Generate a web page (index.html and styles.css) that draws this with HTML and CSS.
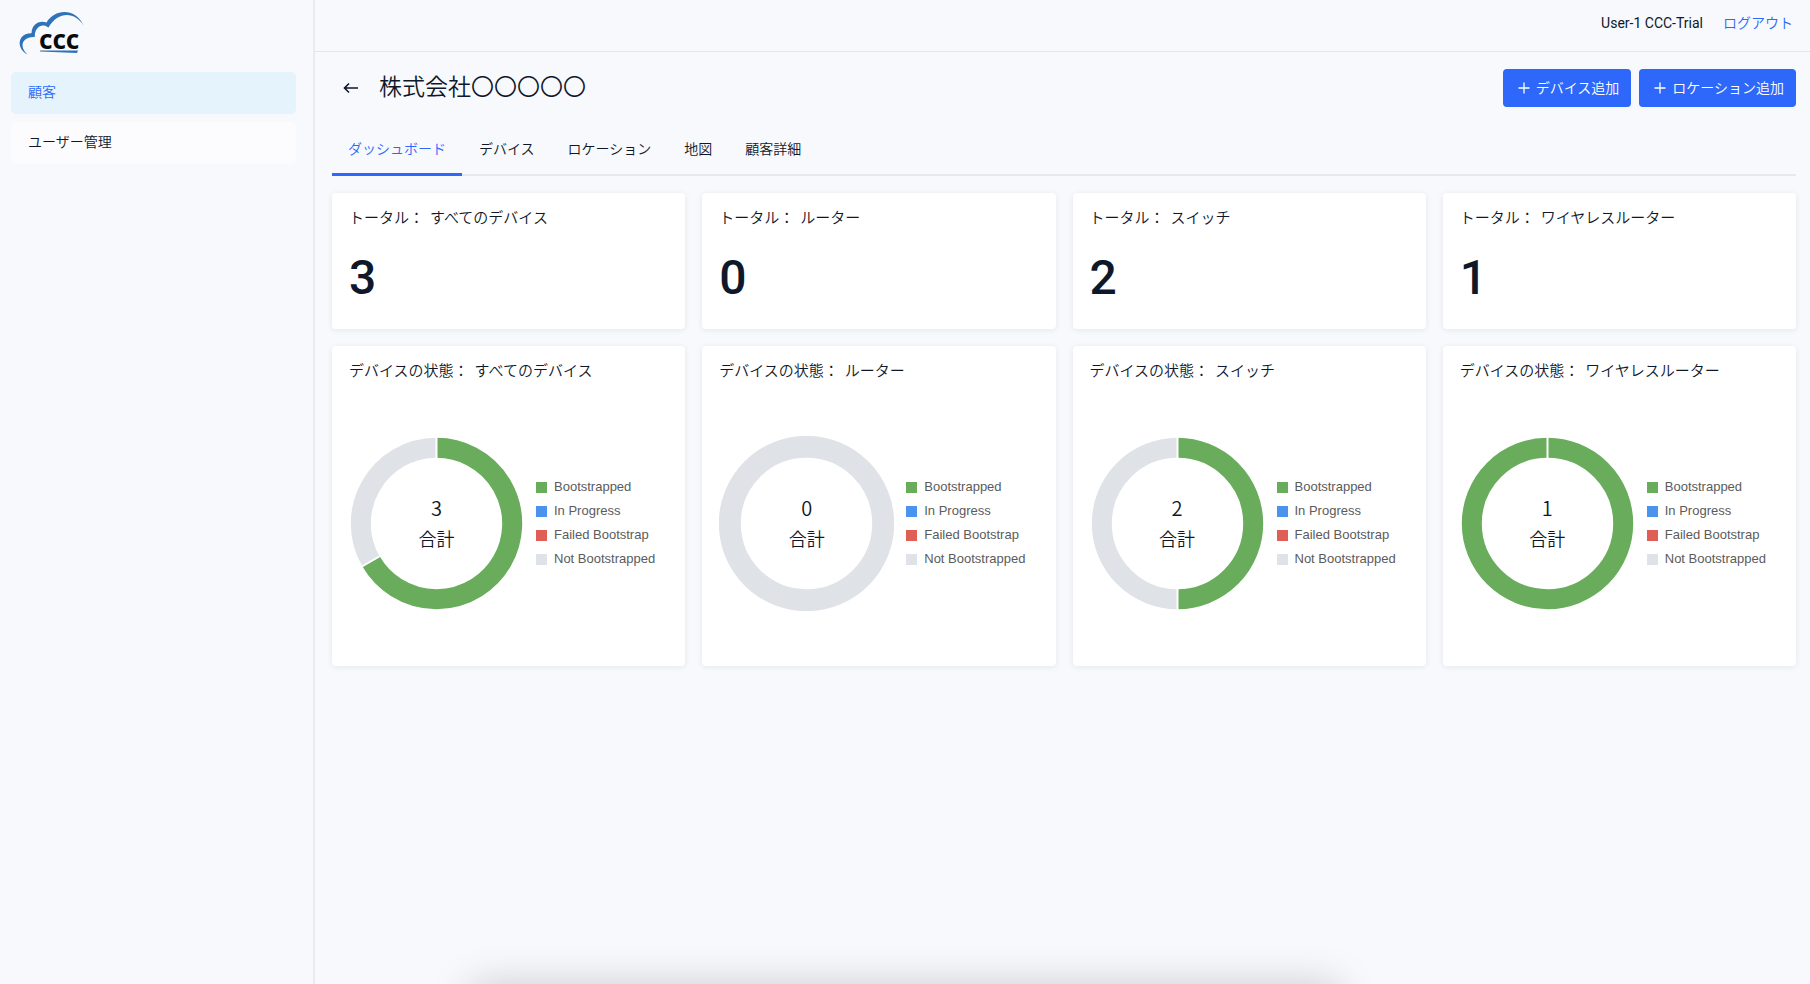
FILE: index.html
```html
<!DOCTYPE html>
<html lang="ja">
<head>
<meta charset="utf-8">
<title>株式会社〇〇〇〇〇</title>
<link rel="stylesheet" href="styles.css">
</head>
<body>
<div class="app">
  <aside class="sidebar">
    <a class="logo" href="#" aria-label="CCC">
      <svg width="66" height="46" viewBox="0 0 66 46" aria-hidden="true">
        <path d="M8.500 44.500C-3 39 -2 23 12.500 23.200C13 14 20 10 27.500 12.500C36 -2 57 -2 64.500 15.500C56 1.500 39 1 29.500 17.500C23 12.500 15.500 17 15.800 27C4 26 -1 36 8.500 44.500Z" fill="#2e72b8"/>
        <text class="logo-text" x="20" y="39">ccc</text>
        <path d="M21 40.500H59L58 43L21 41.500Z" fill="#2e72b8"/>
      </svg>
    </a>
    <nav class="menu">
      <a class="menu-item active" href="#">顧客</a>
      <a class="menu-item" href="#">ユーザー管理</a>
    </nav>
  </aside>
  <div class="page">
    <header class="topbar">
      <span class="user">User-1 CCC-Trial</span>
      <a class="logout" href="#">ログアウト</a>
    </header>
    <main class="content">
      <div class="title-row">
        <button class="back" type="button" aria-label="戻る">
          <svg width="16" height="16" viewBox="0 0 16 16" aria-hidden="true"><path d="M15 8H2M6 3.500L1.500 8L6 12.500" fill="none" stroke="currentColor" stroke-width="1.600"/></svg>
        </button>
        <h1 class="title">株式会社〇〇〇〇〇</h1>
        <div class="actions">
          <button class="btn" type="button"><svg width="14" height="14" viewBox="0 0 14 14" aria-hidden="true"><path d="M7 1.500V12.500M1.500 7H12.500" stroke="currentColor" stroke-width="1.300"/></svg>デバイス追加</button>
          <button class="btn" type="button"><svg width="14" height="14" viewBox="0 0 14 14" aria-hidden="true"><path d="M7 1.500V12.500M1.500 7H12.500" stroke="currentColor" stroke-width="1.300"/></svg>ロケーション追加</button>
        </div>
      </div>
      <nav class="tabs">
        <a class="tab active" href="#">ダッシュボード</a>
        <a class="tab" href="#">デバイス</a>
        <a class="tab" href="#">ロケーション</a>
        <a class="tab" href="#">地図</a>
        <a class="tab" href="#">顧客詳細</a>
      </nav>
      <div class="cards">
        <section class="card"><h2 class="card-title"><span>トータル：</span> <span>すべてのデバイス</span></h2><p class="total">3</p></section>
        <section class="card"><h2 class="card-title"><span>トータル：</span> <span>ルーター</span></h2><p class="total">0</p></section>
        <section class="card"><h2 class="card-title"><span>トータル：</span> <span>スイッチ</span></h2><p class="total">2</p></section>
        <section class="card"><h2 class="card-title"><span>トータル：</span> <span>ワイヤレスルーター</span></h2><p class="total">1</p></section>

        <section class="card">
          <h2 class="card-title"><span>デバイスの状態：</span> <span>すべてのデバイス</span></h2>
          <div class="chart">
            <div class="donut">
              <svg class="ring" viewBox="-87.500 -87.500 175 175" aria-hidden="true">
                <path class="arc ok" d="M0 -75.700A75.700 75.700 0 1 1 -65.560 37.850"/>
                <path class="arc none" d="M-65.560 37.850A75.700 75.700 0 0 1 0 -75.700"/>
                <path class="cut" d="M0 -60V-88M-51.960 30L-76.210 44"/>
              </svg>
              <div class="center"><span class="count">3</span><span class="unit">合計</span></div>
            </div>
            <ul class="legend"><li class="key ok">Bootstrapped</li><li class="key progress">In Progress</li><li class="key failed">Failed Bootstrap</li><li class="key none">Not Bootstrapped</li></ul>
          </div>
        </section>
        <section class="card">
          <h2 class="card-title"><span>デバイスの状態：</span> <span>ルーター</span></h2>
          <div class="chart">
            <div class="donut">
              <svg class="ring" viewBox="-87.500 -87.500 175 175" aria-hidden="true">
                <circle class="arc none empty" r="76.700"/>
              </svg>
              <div class="center"><span class="count">0</span><span class="unit">合計</span></div>
            </div>
            <ul class="legend"><li class="key ok">Bootstrapped</li><li class="key progress">In Progress</li><li class="key failed">Failed Bootstrap</li><li class="key none">Not Bootstrapped</li></ul>
          </div>
        </section>
        <section class="card">
          <h2 class="card-title"><span>デバイスの状態：</span> <span>スイッチ</span></h2>
          <div class="chart">
            <div class="donut">
              <svg class="ring" viewBox="-87.500 -87.500 175 175" aria-hidden="true">
                <path class="arc ok" d="M0 -75.700A75.700 75.700 0 0 1 0 75.700"/>
                <path class="arc none" d="M0 75.700A75.700 75.700 0 0 1 0 -75.700"/>
                <path class="cut" d="M0 -60V-88M0 60V88"/>
              </svg>
              <div class="center"><span class="count">2</span><span class="unit">合計</span></div>
            </div>
            <ul class="legend"><li class="key ok">Bootstrapped</li><li class="key progress">In Progress</li><li class="key failed">Failed Bootstrap</li><li class="key none">Not Bootstrapped</li></ul>
          </div>
        </section>
        <section class="card">
          <h2 class="card-title"><span>デバイスの状態：</span> <span>ワイヤレスルーター</span></h2>
          <div class="chart">
            <div class="donut">
              <svg class="ring" viewBox="-87.500 -87.500 175 175" aria-hidden="true">
                <circle class="arc ok" r="75.700"/>
                <path class="cut" d="M0 -60V-88"/>
              </svg>
              <div class="center"><span class="count">1</span><span class="unit">合計</span></div>
            </div>
            <ul class="legend"><li class="key ok">Bootstrapped</li><li class="key progress">In Progress</li><li class="key failed">Failed Bootstrap</li><li class="key none">Not Bootstrapped</li></ul>
          </div>
        </section>
      </div>
    </main>
  </div>
</div>
<div class="bottom-shade"></div>
</body>
</html>
```
FILE: styles.css
```css
* { box-sizing: border-box; }
body {
  margin: 0;
  background: #f7f9fd;
  color: #0f172a;
  font: 350 14px/22px Roboto, "Noto Sans CJK JP", sans-serif;
}
a { color: inherit; text-decoration: none; }
button { font: inherit; border: 0; cursor: pointer; }
h1, h2, p, ul { margin: 0; padding: 0; font-weight: inherit; }

.app { display: flex; min-height: 100vh; }
.sidebar {
  flex: 0 0 315px;
  padding: 10px 17px 0 11px;
  border-right: 2px solid #e9ebf0;
}
.logo { display: block; height: 46px; margin: 0 0 16px 8px; }
.logo svg { display: block; }
.logo-text { font: 700 26px "Noto Sans", sans-serif; fill: #0a0a0a; }
.menu { display: grid; gap: 8px; }
.menu-item {
  padding: 9px 17px 11px;
  border-radius: 5px;
  background: #fcfcfe;
}
.menu-item.active { background: #e5f3fc; color: #2d68fb; }

.page { flex: 1; min-width: 0; }
.topbar {
  display: flex;
  justify-content: flex-end;
  gap: 20px;
  padding: 12px 17px 17px;
  border-bottom: 1px solid #e4e6ea;
}
.user { font-weight: 400; }
.logout { color: #2d68fb; }

.content { padding: 17px 14px 17px 17px; }
.title-row { display: flex; align-items: center; height: 38px; }
.back {
  display: flex;
  padding: 0;
  margin: 0 20px 0 11px;
  background: none;
  color: inherit;
}
.title { flex: 1; font-size: 23px; line-height: 38px; }
.actions { display: flex; gap: 8px; }
.btn {
  display: flex;
  align-items: center;
  gap: 5px;
  height: 38px;
  padding: 0 12px 0 14px;
  border-radius: 4px;
  background: #2d68fb;
  color: #fff;
}

.tabs {
  display: flex;
  gap: 1px;
  margin: 31px 0 17px;
  box-shadow: inset 0 -2px #e5e8ec;
}
.tab { padding: 0 16px 13px; border-bottom: 3px solid transparent; }
.tab.active { border-color: #2d68fb; color: #2d68fb; }

.cards {
  display: grid;
  grid-template-columns: repeat(4, 1fr);
  gap: 17px;
}
.card {
  padding: 17px;
  border-radius: 4px;
  background: #fff;
  box-shadow: 0 1px 6px rgba(15, 23, 42, 0.08);
}
.card-title { display: flex; gap: 6px; font-size: 15px; line-height: 17px; }
.total { margin-top: 17px; font-size: 48px; font-weight: 500; line-height: 68px; }

.chart {
  display: flex;
  align-items: center;
  gap: 12px;
  height: 252px;
  margin-top: 17px;
}
.donut { display: grid; flex: none; width: 175px; }
.ring, .center { grid-area: 1 / 1; }
.ring { width: 100%; }
.arc { fill: none; stroke-width: 20; }
.arc.ok { stroke: #68ac5c; }
.arc.none { stroke: #dfe2e7; }
.arc.empty { stroke-width: 22; }
.cut { stroke: #fff; stroke-width: 2; }
.center {
  display: grid;
  align-content: center;
  justify-items: center;
  font-family: "Noto Sans CJK JP", sans-serif;
}
.count { font-size: 20px; line-height: 31px; }
.unit { font-size: 18px; line-height: 31px; }

.legend {
  list-style: none;
  color: #5b5b5b;
  font: 400 13px/24px "Liberation Sans", Arial, sans-serif;
}
.key { display: flex; align-items: center; gap: 7px; white-space: nowrap; }
.key::before { content: ""; width: 11px; height: 11px; }
.key.ok::before { background: #68ac5c; }
.key.progress::before { background: #4a94ee; }
.key.failed::before { background: #df5e56; }
.key.none::before { background: #dfe2e7; }

.bottom-shade {
  position: fixed;
  top: 100vh;
  left: 26%;
  right: 26%;
  height: 60px;
  box-shadow: 0 0 40px rgba(0, 0, 0, 0.18);
  pointer-events: none;
}
```
